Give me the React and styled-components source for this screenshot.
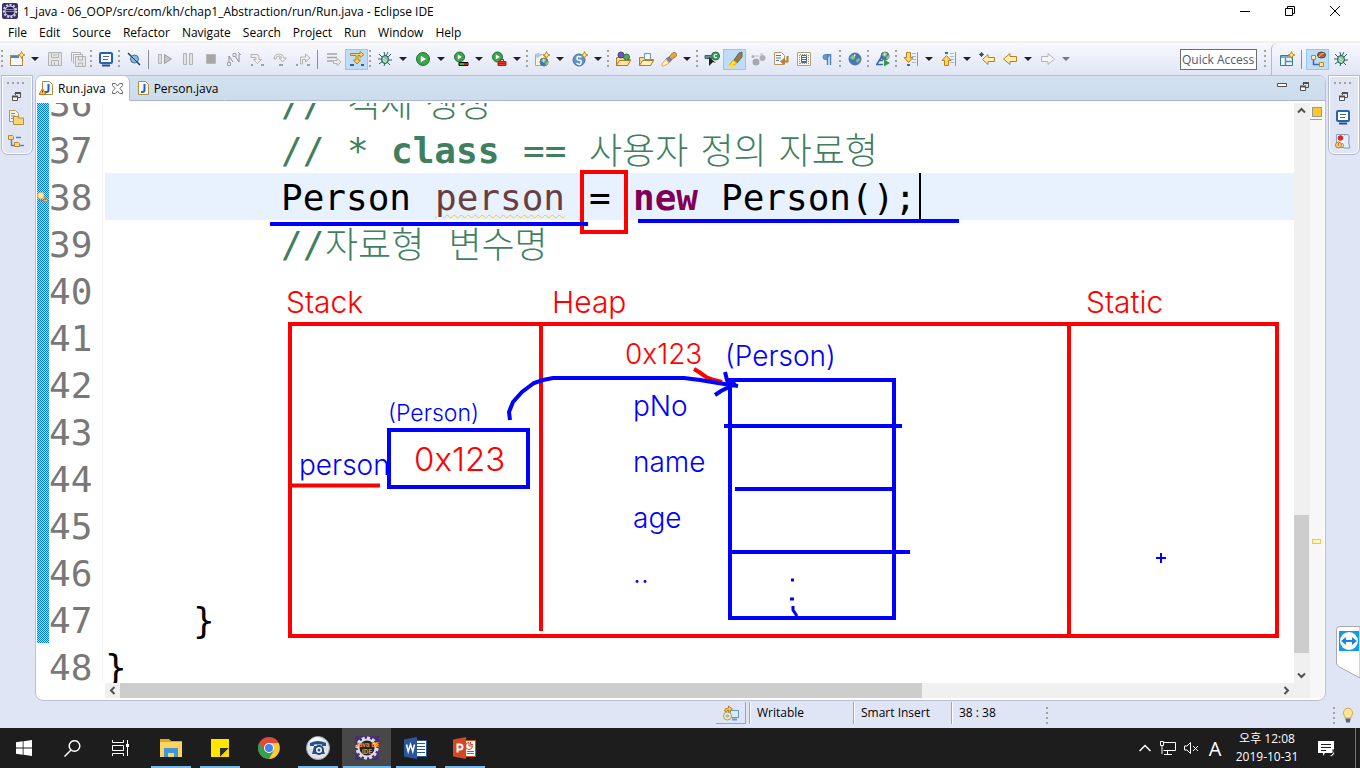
import React from 'react';
import styled, { createGlobalStyle } from 'styled-components';

const UI = '"Open Sans", "Noto Sans CJK KR", sans-serif';
const CODE = '"DejaVu Sans Mono", "Noto Sans CJK KR", monospace';
const HAND = 'Inter, "Noto Sans CJK KR", sans-serif';

const GlobalStyle = createGlobalStyle`
  * { box-sizing: border-box; }
  body { margin: 0; font-family: ${UI}; font-size: 12px; color: #000; background: #e0e5f5; }
  button, input { font: inherit; color: inherit; margin: 0; padding: 0; border: 0; background: none; }
  svg { display: block; flex: none; }
`;

const Screen = styled.div`
  display: flex;
  flex-direction: column;
  height: 100vh;
  overflow: hidden;
`;

/* ---------- title and menu ---------- */
const TitleBar = styled.header`
  display: flex;
  align-items: center;
  height: 22px;
  padding-left: 2px;
  background: #fff;
`;
const Title = styled.h1`
  flex: 1;
  margin: 0 0 0 5px;
  font-size: 12px;
  font-weight: 400;
  white-space: nowrap;
`;
const WindowButton = styled.button`
  display: flex;
  justify-content: center;
  align-items: center;
  width: 45px;
  height: 22px;
  &:last-child { margin-right: 3px; }
`;
const MenuBar = styled.nav`
  display: flex;
  gap: 12px;
  height: 21px;
  padding-left: 8px;
  background: #fff;
  border-bottom: 2px solid #f0f0f0;
`;
const MenuItem = styled.button`
  padding-top: 2px;
  line-height: 18px;
`;

/* ---------- toolbar ---------- */
const ToolBar = styled.div`
  display: flex;
  align-items: center;
  height: 32px;
  background: linear-gradient(#f8f9fe, #e0e5f5);
`;
const Tool = styled.button`
  display: flex;
  justify-content: center;
  align-items: center;
  width: 23px;
  height: 21px;
  border: 1px solid ${(p) => (p.$on ? '#90c8f6' : 'transparent')};
  background: ${(p) => (p.$on ? '#bfdcf8' : 'none')};
`;
const DropButton = styled.button`
  width: 15px;
  height: 21px;
  padding-left: 3px;
`;
const Dots = styled.span`
  width: 5px;
  height: 18px;
  padding-left: 1px;
  background: repeating-linear-gradient(#a8a294 0 2px, transparent 2px 5px) 1px 0 / 2px 100% no-repeat;
`;
const Rule = styled.span`
  width: 8px;
  height: 19px;
  background: linear-gradient(#8d8d92, #8d8d92) 3px 0 / 1px 100% no-repeat;
`;
const Spacer = styled.span`
  flex: 1;
`;
const QuickAccess = styled.input`
  width: 77px;
  height: 21px;
  margin-right: 6px;
  padding-left: 1px;
  border: 1px solid #6d6d6d;
  background: #fff;
  &::placeholder { color: #55596e; opacity: 1; }
`;
const Perspectives = styled.div`
  display: flex;
  align-items: center;
  height: 32px;
  margin-left: 3px;
  padding: 0 8px 0 3px;
  border-left: 1px solid #b6bac8;
  border-top-left-radius: 6px;
`;

/* ---------- workbench ---------- */
const Workbench = styled.main`
  display: flex;
  flex: 1;
  min-height: 0;
  gap: 2px;
  padding-left: 1px;
`;
const TrimStack = styled.aside`
  display: flex;
  flex-direction: column;
  align-items: center;
  align-self: flex-start;
  width: 32px;
  height: 80px;
  padding: 6px 2px 0 0;
  gap: 8px;
  border: 1px solid #b3b9d2;
  border-radius: 0 0 7px 7px;
  box-shadow: inset 0 0 0 1px #fff;
`;
const TrimDots = styled.span`
  width: 18px;
  height: 2px;
  background: repeating-linear-gradient(90deg, #a8a294 0 2px, transparent 2px 5px);
`;
const TrimButton = styled.button`
  display: flex;
  justify-content: center;
  width: 22px;
`;
const Folder = styled.section`
  display: flex;
  flex-direction: column;
  flex: 1;
  min-width: 0;
  border: 1px solid #b9bfd4;
  border-radius: 7px 7px 8px 8px;
  background: #fff;
  overflow: hidden;
`;
const TabStrip = styled.div`
  display: flex;
  height: 25px;
  background: linear-gradient(#d3e1ef, #ccdcec);
`;
const Tab = styled.button`
  display: flex;
  align-items: center;
  gap: 3px;
  padding: 0 6px 0 ${(p) => (p.$active ? '3px' : '5px')};
  background: ${(p) => (p.$active ? '#fff' : 'none')};
  border-bottom: 1px solid ${(p) => (p.$active ? '#fff' : '#aab6cf')};
  border-right: 1px solid ${(p) => (p.$active ? '#b3b9d2' : 'transparent')};
  border-radius: ${(p) => (p.$active ? '6px 6px 0 0' : '0')};
`;
const CloseMark = styled.svg`
  margin-left: 3px;
`;
const TabTail = styled.div`
  display: flex;
  flex: 1;
  justify-content: flex-end;
  align-items: flex-start;
  gap: 13px;
  padding: 6px 16px 0 0;
  border-bottom: 1px solid #aab6cf;
`;
const EditorGrid = styled.div`
  display: grid;
  flex: 1;
  min-height: 0;
  grid-template-columns: minmax(0, 1fr) 16px 14px;
  grid-template-rows: minmax(0, 1fr) 15px;
  padding: 2px 1px 2px;
`;
const Source = styled.div`
  position: relative;
  overflow: hidden;
`;
const Lines = styled.div`
  margin-top: -24px;
`;
const Line = styled.div`
  display: grid;
  grid-template-columns: 12px 43px 11px minmax(0, 1fr);
  height: 47px;
  line-height: 49px;
  font-family: ${CODE};
  font-size: 36px;
  white-space: pre;
`;
const ChangeRuler = styled.span`
  position: relative;
  display: flex;
  align-items: center;
`;
const Dither = styled.svg`
  position: absolute;
  inset: 0;
`;
const Marker = styled.span`
  position: relative;
`;
const LineNumber = styled.span`
  height: 47px;
  color: #787878;
  text-align: right;
`;
const Fold = styled.span`
  border-right: 1px solid #f2f2f2;
`;
const CodeText = styled.code`
  display: flex;
  height: 47px;
  margin-left: 2px;
  padding-left: ${(p) => p.$indent * 22}px;
  background: ${(p) => (p.$current ? '#e8f2fe' : 'none')};
  font-family: inherit;
`;
const inks = { plain: '#000', comment: '#3f7f5f', variable: '#6a3e3e', keyword: '#7f0055' };
const Token = styled.span`
  width: ${(p) => p.$cols * 22}px;
  color: ${(p) => inks[p.$ink]};
  font-weight: ${(p) => (p.$strong ? 700 : 400)};
`;
const Warned = styled.span`
  text-decoration: underline wavy 1px #f4c82d;
  text-underline-offset: 4px;
`;
const Hangul = styled.span`
  margin-right: ${(p) => (p.$wide ? '24px' : '12px')};
  color: #3f7f5f;
  font-family: "Noto Sans CJK KR", sans-serif;
  font-weight: 300;
  line-height: 45px;
`;
const Caret = styled.span`
  width: 2px;
  background: #000;
`;
const Annotations = styled.svg`
  position: absolute;
  top: 0;
  left: 68px;
  overflow: visible;
`;
const Label = styled.text`
  font-family: ${HAND};
  font-weight: 300;
  font-size: ${(p) => p.$size || 28}px;
  fill: ${(p) => p.$tone};
`;
const Bar = styled.div`
  display: flex;
  flex-direction: ${(p) => (p.$across ? 'row' : 'column')};
  margin-left: ${(p) => (p.$across ? '68px' : '0')};
  background: #f0f0f0;
`;
const BarButton = styled.button`
  display: flex;
  flex: none;
  justify-content: center;
  align-items: center;
  width: 15px;
  height: 15px;
`;
const BarPart = styled.span`
  flex: ${(p) => p.$share} 1 0;
  width: ${(p) => (p.$upright ? '15px' : 'auto')};
  background: ${(p) => (p.$thumb ? '#cdcdcd' : 'none')};
`;
const Overview = styled.div`
  display: flex;
  flex-direction: column;
  grid-row: span 2;
  padding: 4px 0 0;
  background: #f7f7f7;
`;
const Summary = styled.span`
  width: 12px;
  height: 13px;
  border-bottom: 1px solid #a0a0a0;
  &::before {
    content: '';
    display: block;
    width: 8px;
    height: 8px;
    margin-left: 2px;
    border: 1px solid #9a9a9a;
    background: #f8c82c;
  }
`;
const OverviewMark = styled.span`
  width: 9px;
  height: 5px;
  margin: 419px 0 0 2px;
  border: 1px solid #efc94a;
  background: #fff3c4;
`;
const RemoteTab = styled.button`
  position: absolute;
  right: 0;
  top: 626px;
`;

/* ---------- status line ---------- */
const StatusLine = styled.footer`
  display: flex;
  height: 27px;
  padding: 1px 3px 4px 716px;
  background: #e0e5f5;
`;
const StatusButton = styled.button`
  display: flex;
  justify-content: center;
  align-items: center;
  width: 30px;
  margin-right: 3px;
  border-right: 1px solid #a2a2a8;
  border-bottom: 1px solid #a2a2a8;
`;
const StatusCell = styled.span`
  width: ${(p) => p.$w}px;
  padding-left: 7px;
  border-left: 1px solid #a2a2a8;
  box-shadow: inset 1px 0 0 #fff;
  line-height: 22px;
`;
const StatusDots = styled(Dots)`
  height: 17px;
  margin-top: 5px;
`;
const TipButton = styled.button`
  padding: 3px 1px 0 3px;
`;

/* ---------- task bar ---------- */
const TaskBar = styled.footer`
  display: flex;
  height: 40px;
  background: #1d1d1d;
  color: #fff;
`;
const SystemGroup = styled.div`
  display: flex;
  margin-right: 2px;
`;
const SystemButton = styled.button`
  display: flex;
  justify-content: center;
  align-items: center;
  width: 48px;
`;
const AppButton = styled.button`
  display: flex;
  justify-content: center;
  align-items: center;
  width: 49px;
  background: ${(p) =>
    p.$running ? 'linear-gradient(#76b9ed, #76b9ed) 50% 100% / ' + (p.$front ? '48px' : '40px') + ' 2px no-repeat' : 'none'};
  background-color: ${(p) => (p.$front ? '#484848' : 'transparent')};
`;
const Tray = styled.div`
  display: flex;
  align-items: center;
  gap: 8px;
  margin-left: auto;
`;
const TrayButton = styled.button`
  display: flex;
  justify-content: center;
  align-items: center;
`;
const InputMode = styled.span`
  width: 16px;
  font-size: 20px;
  text-align: center;
`;
const Clock = styled.time`
  width: 70px;
  margin: 0 8px 0 1px;
  line-height: 18px;
  text-align: center;
  white-space: nowrap;
`;
const DesktopEdge = styled.span`
  align-self: stretch;
  width: 5px;
  margin-left: 12px;
  border-left: 1px solid #777;
`;

/* ---------- icons ---------- */
const Svg = ({ s = 16, children }) => (
  <svg width={s} height={s} viewBox="0 0 16 16" fill="none" aria-hidden="true">{children}</svg>
);
const spark = <path d="M12.500 .5l1 2.500 2.500 1-2.500 1-1 2.500-1-2.500-2.500-1 2.500-1z" fill="#fbe9a0" stroke="#c28f1c" />;
const playBall = (cx, cy, r) => (
  <>
    <circle cx={cx} cy={cy} r={r} fill="#3fa34a" stroke="#1d7435" />
    <path d={`M${cx - r / 3} ${cy - r / 2}v${r}l${r * 0.8} ${-r / 2}z`} fill="#fff" />
  </>
);
const bug = (
  <>
    <path d="M2 3l4 4M1 8h5M2 13l4-3M14 3l-4 4M15 9h-5M13 14l-4-4M7 1l1 4M11 1l-2 4M7 15l1-3" stroke="#2f5f68" />
    <ellipse cx="8" cy="8.500" rx="3.500" ry="4" fill="#8cc39a" stroke="#1e5a5e" />
    <path d="M6 7l4 3M6 9.500l3 2" stroke="#d7efd8" />
  </>
);
const globe = (cx, cy, r) => (
  <>
    <circle cx={cx} cy={cy} r={r} fill="#3c7bbd" stroke="#5b6f96" />
    <path d={`M${cx - r + 1} ${cy - 1}l2-3 3 1 0 2-2 2zM${cx + 1} ${cy + 1}l3-2 1 2-3 3z`} fill="#8fc27c" />
    <path d={`M${cx - 1} ${cy - r + 1}l2 1-2 2z`} fill="#f3e7ae" />
  </>
);
const folderShape = <path d="M1.500 14.500v-8h4l1-1h6v3h3l-3 6z" fill="#fbdc8c" stroke="#b27a24" />;
const monitor = (
  <>
    <rect x="2" y="2" width="12" height="10" rx="1" fill="#fff" stroke="#2d62a8" strokeWidth="2" />
    <path d="M5 5.500h6M5 8.500h5" stroke="#3d6ba8" />
    <path d="M4 14.500h8" stroke="#1f4f92" strokeWidth="2" />
  </>
);
const javaFile = (
  <>
    <path d="M3.500 1.500h7l3 3v10h-10z" fill="#f4f8ff" stroke="#ae8c3c" />
    <path d="M9.500 4v6q0 2-2 2h-1.500" stroke="#2a62a8" strokeWidth="2" />
  </>
);
const warn = (x, y) => (
  <>
    <path d={`M${x} ${y + 6}l3.500-6 3.500 6z`} fill="#f8c24c" stroke="#c07818" />
    <path d={`M${x + 3.5} ${y + 2}v2`} stroke="#5c3a08" />
  </>
);
const bulb = (
  <>
    <path d="M5 11Q5 9 4 8Q2.500 6 4 3.500Q6 1 8 1Q10 1 12 3.500Q13.500 6 12 8Q11 9 11 11z" fill="#fde79a" stroke="#e3a33a" />
    <path d="M5.500 12.500h5M6 14.500h4" stroke="#54697c" strokeWidth="2" />
  </>
);
const stepDash = (c) => <path d="M1 14h4M12 14h3" stroke={c} strokeWidth="2" />;
const G = '#b3b3b3';

const icons = {
  newWizard: (<><rect x="1.500" y="4.500" width="12" height="10" fill="#f3f8ff" stroke="#b98a2c" /><path d="M2 6h8" stroke="#4c84c0" strokeWidth="2" />{spark}</>),
  save: (<><path d="M1.500 1.500h13v13h-13z" fill="#e6e6e8" stroke={G} /><path d="M4.500 2v4.500h7V2M4.500 14v-4.500h7V14M7.500 11v3M6 4h4" stroke={G} /></>),
  saveAll: (<><path d="M1.500 10.500v-9h9v2M3.500 12.500v-9h9v2" stroke={G} /><path d="M5.500 5.500h10v10h-10z" fill="#e6e6e8" stroke={G} /><path d="M8.500 6v3h4V6M8.500 15v-3h4v3" stroke={G} /></>),
  monitor,
  skip: (<><path d="M2 2l12 12" stroke="#1e3f76" strokeWidth="1.500" /><circle cx="8.500" cy="8" r="4" fill="#8eb8d8" stroke="#3c6da4" /><path d="M2 2l12 12" stroke="#1e3f76" /></>),
  resume: (<><path d="M1.500 3.500h3v9h-3z" fill="#ddd" stroke={G} /><path d="M7.500 3.500v9l7-4.500z" fill="#c4c4c6" stroke="#9f9fa2" /></>),
  pause: <path d="M3.500 2.500h3v11h-3zM9.500 2.500h3v11h-3z" fill="#e3e3e6" stroke={G} />,
  stop: <path d="M3.500 3.500h9v9h-9z" fill="#a6a6a8" stroke="#b8b8ba" />,
  disconnect: (<><path d="M3 12V5l4 6M9 5l4 6V3" stroke="#8e8e92" /><path d="M1.500 11.500h3v3h-3zM7 2.500h3v3H7zM12 1l3 3" stroke="#a2a2a6" /></>),
  stepInto: (<><path d="M2 3.500h6q2 0 2 3v2h2.500l-4 4-4-4H7V6.500H2z" fill="#eee" stroke={G} /><path d="M12 14h3M2 14h2" stroke="#9fa0a6" strokeWidth="2" /></>),
  stepOver: (<><path d="M2 8q0-5 5.500-5Q11 3 12 7h2.500l-4 4-3.500-4H10q-1-2-3-2-3 0-3 3z" fill="#eee" stroke={G} /><path d="M7 14h4" stroke="#9fa0a6" strokeWidth="2" /></>),
  stepReturn: (<><path d="M5.500 13V6h5V3l4.500 4-4.500 4V8.500h-3V13z" fill="#eee" stroke={G} /><path d="M1 14h2M12 14h3" stroke="#9fa0a6" strokeWidth="2" /></>),
  dropFrame: (<><path d="M1 3h10M1 6.500h10M1 10h6" stroke="#a5a5a8" strokeWidth="1.500" /><path d="M7.500 9.500H11v-2l4 3.500-4 3.500v-2H7.500z" fill="#eee" stroke={G} /></>),
  filter: (<><path d="M1.500 2.500H11V.5l4 3-4 3v-2H9V9h2.500L8 13 4.500 9H7V4.500H1.500z" fill="#fdd45e" stroke="#bb8118" />{stepDash('#385f96')}</>),
  bug,
  run: playBall(8, 8, 6.5),
  coverage: (<>{playBall(6.5, 6, 5)}<path d="M6 11.500h9v3H6z" fill="#22c322" stroke="#000" /><path d="M11 12h4v2h-4z" fill="#d01818" /></>),
  external: (<>{playBall(6.5, 6, 5)}<path d="M7 10.500h8v4H7z" fill="#e83a32" stroke="#b81818" /><path d="M9.500 10V8.500h3V10M7 12.500h8" stroke="#b81818" /></>),
  webProject: (<><path d="M1.500 3.500h7l4 4v7h-11z" fill="#f8f3df" stroke="#bda66b" /><path d="M1 3l4-1 3 2-5 3z" fill="#a6cbe6" />{globe(10, 11, 4)}{spark}</>),
  servlet: (<><circle cx="7" cy="9" r="6" fill="#5c95cb" stroke="#3f73aa" /><path d="M9.500 6Q5 4.500 5 7t2.500 2.200T9 12 4.500 12" stroke="#fff" strokeWidth="1.500" />{spark}</>),
  openType: (<>{folderShape}<circle cx="6" cy="4" r="3" fill="#6a5ba8" stroke="#4c3f8a" /><circle cx="11.500" cy="6" r="3" fill="#57a565" stroke="#2c7a42" /><path d="M1.500 14.500l3-5h11l-3 5z" fill="#fde6a6" stroke="#b27a24" /></>),
  openTask: (<>{folderShape}<path d="M6.500 2.500h6v6h-6z" fill="#f2f6fd" stroke="#7790b8" /><path d="M1.500 14.500l3-5h11l-3 5z" fill="#fff0c0" stroke="#b27a24" /></>),
  search: (<><path d="M8 6l4-4.500 3 .5.500 3L10 9z" fill="#e9a83d" stroke="#b67824" /><path d="M5 8l3-2 2.500 3L8 11.500z" fill="#8a7fa8" stroke="#6e6790" /><path d="M5 8l3 4-5 3H1v-2z" fill="#fff7c8" stroke="#e0a648" /></>),
  toggle: (<><path d="M1 4.500h9v3H1z" fill="#6f8794" stroke="#43606e" /><path d="M5 6v9l4-4 3 1z" fill="#222" /><circle cx="11.500" cy="5" r="4" fill="#3f9a5b" stroke="#24754a" /><path d="M13 3.500q-3-1-3 1.500t3 1.500" stroke="#fff" /></>),
  marker: (<><path d="M7 9l5-7 3-1v5l-5 6z" fill="#8d7f55" stroke="#6f6748" /><path d="M6 9l4 3-3 2-5 1z" fill="#fbe23a" stroke="#d8a920" /><path d="M0 15h8" stroke="#f8de46" strokeWidth="2" /></>),
  nulls: (<><circle cx="6" cy="11" r="3.500" fill="#a8a8aa" /><circle cx="12.500" cy="7" r="3" fill="#b0b0b2" /><circle cx="3" cy="5.500" r="1.500" fill="#b0b0b2" /><path d="M5 5h4M10 3h3" stroke="#b8b8ba" /></>),
  wrap: (<><path d="M1.500 1.500h7l3 3v9h-10z" fill="#f6f8ff" stroke="#b09a62" /><path d="M3 4.500h5M3 7h5M3 9.500h3" stroke="#56779f" /><path d="M14.500 5v5.500H9.500M11.500 8l-3 2.500 3 2.500" stroke="#b8812a" strokeWidth="2" /></>),
  block: (<><path d="M1.500 1.500h13v13h-13z" fill="#fbf8ec" stroke="#b6a268" /><path d="M4 3.500h8M4 12.500h8M3.500 4v9M12.500 4v9" stroke="#7d95b6" strokeDasharray="1 1" /><path d="M5.500 4.500h5v7h-5z" stroke="#46699c" /><path d="M6 6.500h4M6 8.500h4M6 10.500h4" stroke="#46699c" /></>),
  pilcrow: (<><path d="M12 3.500H6.500a2.500 2.500 0 000 5H8" fill="#6b9ac9" stroke="#4f83b6" /><path d="M8.500 3v11M11.500 3v11" stroke="#4f83b6" strokeWidth="1.500" /></>),
  globe: globe(8, 8, 6),
  service: (<>{globe(10, 5, 4)}<path d="M2 13L7 5M1 13.500h7M4 9.500h4" stroke="#3d66a0" strokeWidth="1.500" /><path d="M9 8.500v7l6-3.500z" fill="#2f9b4c" /></>),
  nextNote: (<><path d="M9 2.500h4M9 5.500h4M9 8.500h4M9 11.500h4" stroke="#a9b6cc" /><path d="M14.500 1v14" stroke="#8a93a8" /><path d="M3.500 1.500h4v5H10l-4.500 5L1 6.500h2.500z" fill="#fdd66a" stroke="#bd7d18" /><path d="M4 14h3" stroke="#3f6ba5" strokeWidth="2" /></>),
  prevNote: (<><path d="M9 2.500h4M9 5.500h4M9 8.500h4M9 11.500h4" stroke="#a9b6cc" /><path d="M14.500 1v14" stroke="#8a93a8" /><path d="M3.500 14.500h4v-5H10l-4.500-5L1 9.500h2.500z" fill="#fdd66a" stroke="#bd7d18" /><path d="M4 2h3" stroke="#3f6ba5" strokeWidth="2" /></>),
  lastEdit: (<><path d="M15.500 6.500H9v-3L3.500 8.500 9 13.500v-3h6.500z" fill="#fff0b0" stroke="#bd7d18" /><path d="M2.500 1v5M0 3.500h5M1 2l3 3M4 2L1 5" stroke="#3c5878" /></>),
  back: <path d="M14.500 5.500H8v-3l-6.500 5.500L8 13.500v-3h6.500z" fill="#fff0b0" stroke="#bd7d18" />,
  forward: <path d="M1.500 5.500H8v-3l6.500 5.500L8 13.500v-3H1.500z" fill="#f4f4f6" stroke="#b4b4b8" />,
  openPersp: (<><path d="M1.500 4.500h12v10h-12z" fill="#eff6ff" stroke="#2f7f86" /><path d="M2 6h10M6.500 7v7M7 10.500h6" stroke="#5a8fb8" strokeWidth="1.500" />{spark}</>),
  javaEE: (<><path d="M3.500 8v5.500h6" stroke="#3a6aa5" strokeWidth="1.500" /><path d="M1.500 4.500h4v4h-4zM9.500 11.500h4v4h-4z" fill="#fdeaa4" stroke="#bd8a22" /><ellipse cx="11.500" cy="4" rx="4" ry="3" fill="#a9653c" stroke="#6e3a1c" /><path d="M9 6q1-3 5-4" stroke="#e7c19c" /></>),
  eclipse: (<><rect width="16" height="16" rx="2" fill="#3d3270" /><circle cx="8" cy="8" r="6.200" stroke="#d4d4dc" strokeWidth="2" strokeDasharray="2 1.500" /><circle cx="8" cy="8" r="5" fill="#2c2255" stroke="#e4e4ea" /><path d="M4 6.500h8M3.500 8.500h9" stroke="#8f88b8" /></>),
  javaFile,
  javaWarn: (<>{javaFile}{warn(0, 8.5)}</>),
  bulb,
  bulbWarn: (<><circle cx="5" cy="6" r="4.500" fill="#fde79a" stroke="#e3a33a" /><path d="M3 12.500h4" stroke="#7d8ea2" strokeWidth="2" />{warn(8, 8)}</>),
  explorer: (<><path d="M1.500 1.500h6l3 3v8h-9z" fill="#f6f3e4" stroke="#b09a62" /><path d="M3 4.500h4M3 7h4M3 9.500h3" stroke="#7089ae" /><path d="M5.500 15.500v-8h4l1 1.500h5v6.500z" fill="#fbd57e" stroke="#bd8a2c" /></>),
  hierarchy: (<><path d="M3.500 7v5.500h4M8 4.500h5M12 12.500h4" stroke="#4f86c0" strokeWidth="1.500" /><path d="M.5 2.500h4l1 1v3h-5zM6.500 9.500h4l1 1v3h-5z" fill="#fbd57e" stroke="#b98a2c" /></>),
  snippet: (<><path d="M1.500 1.500h9v13h-9z" fill="#f2f6fd" stroke="#8fa0bd" /><path d="M9 2q6-2 5 3t1 10H9" fill="#e8eef6" stroke="#7f9ab8" /><circle cx="5.500" cy="5" r="2.800" fill="#e02828" /><circle cx="3.500" cy="12" r="3" fill="#f6cf86" stroke="#b57a24" /><path d="M3.500 10v3M7.500 10q2 2 0 5" stroke="#b57a24" /></>),
  update: (<><rect x="7.500" y="5.500" width="8" height="7" fill="#dcebfb" stroke="#6a94cc" /><path d="M9 14.500h5" stroke="#6a94cc" strokeWidth="2" /><circle cx="4.500" cy="11" r="4" fill="#eee7c8" stroke="#a9a078" /><circle cx="4.500" cy="11" r="1" fill="#fff" stroke="#8c8a78" /><path d="M1.500 6q0-3 4-3V1l4 3-4 3V5q-2 0-2 2z" fill="#f6c94e" stroke="#b8871e" /></>),
};
const Icon = ({ name, s }) => <Svg s={s}>{icons[name]}</Svg>;

const RestoreGlyph = () => (
  <svg width="9" height="9" viewBox="0 0 9 9" fill="none" aria-hidden="true">
    <path d="M3.500 3V1.500h5v4H6M2.500 1.500h6" stroke="#55504a" />
    <path d="M.5 4.500h5v4h-5z" fill="#fff" stroke="#55504a" />
    <path d="M3 1h6M0 4.500h6" stroke="#55504a" strokeWidth="2" />
  </svg>
);

const tools = [
  '|:', 'newWizard', 'v', 'save', 'saveAll', '|:', 'monitor', '|:', 'skip', '|', 'resume', 'pause', 'stop',
  'disconnect', 'stepInto', 'stepOver', 'stepReturn', '|', 'dropFrame', 'filter*', '|:', 'bug', 'v', 'run', 'v',
  'coverage', 'v', 'external', 'v', '|:', 'webProject', 'v', 'servlet', 'v', '|:', 'openType', 'openTask', 'search',
  'v', '|:', 'toggle', 'marker*', 'nulls', 'wrap', 'block', 'pilcrow', '|:', 'globe', '|:', 'service', '|:',
  'nextNote', 'v', 'prevNote', 'v', 'lastEdit', 'back', 'v', 'forward', 'v-',
];

function ToolEntry({ id }) {
  if (id === '|:') return <Dots />;
  if (id === '|') return <Rule />;
  if (id === 'v' || id === 'v-') {
    return (
      <DropButton aria-label="More">
        <svg width="8" height="4" viewBox="0 0 8 4" aria-hidden="true"><path d="M0 0h8L4 4z" fill={id === 'v' ? '#222' : '#777'} /></svg>
      </DropButton>
    );
  }
  const name = id.replace('*', '');
  return <Tool $on={id.endsWith('*')} aria-label={name}><Icon name={name} /></Tool>;
}

const T = ({ c, ink = 'plain', strong, children }) => <Token $cols={c} $ink={ink} $strong={strong}>{children}</Token>;

const lines = [
  { n: 36, indent: 8, code: <><T c={3} ink="comment">//</T><Hangul>객체</Hangul><Hangul>생성</Hangul></> },
  {
    n: 37, indent: 8,
    code: (
      <>
        <T c={3} ink="comment">//</T><T c={2} ink="comment">*</T><T c={6} ink="comment" strong>class</T>
        <T c={3} ink="comment">==</T><Hangul>사용자</Hangul><Hangul>정의</Hangul><Hangul>자료형</Hangul>
      </>
    ),
  },
  {
    n: 38, indent: 8, current: true,
    code: (
      <>
        <T c={7}>Person</T><T c={7} ink="variable"><Warned>person</Warned></T><T c={2}>=</T>
        <T c={4} ink="keyword" strong>new</T><T c={9}>Person();</T><Caret />
      </>
    ),
  },
  { n: 39, indent: 8, code: <><T c={2} ink="comment">//</T><Hangul $wide>자료형</Hangul><Hangul>변수명</Hangul></> },
  ...[40, 41, 42, 43, 44, 45, 46].map((n) => ({ n, indent: 0 })),
  { n: 47, indent: 4, code: <T c={1}>{'}'}</T> },
  { n: 48, indent: 0, code: <T c={1}>{'}'}</T> },
];

/* The rows are an odd number of pixels high, so every other row starts half a period later. */
const ChangedTexture = ({ line }) => (
  <Dither width="100%" height="100%" shapeRendering="crispEdges" aria-hidden="true">
    <defs>
      <pattern id={`changed-${line}`} y={line % 2} width="2" height="2" patternUnits="userSpaceOnUse">
        <path d="M0 0h2v2h-2z" fill="#b4dcf2" />
        <path d="M0 0h1v1h-1zM1 1h1v1h-1z" fill="#0078d7" />
      </pattern>
    </defs>
    <rect width="100%" height="100%" fill={`url(#changed-${line})`} />
  </Dither>
);

const RED = '#f00';
const BLUE = '#00f';

const MemoryDiagram = () => (
  <Annotations width="1188" height="580" viewBox="105 103 1188 580" fill="none" strokeWidth="4">
    <g stroke={RED}>
      <rect x="582" y="172" width="44" height="60" />
      <rect x="290" y="324" width="987" height="312" />
      <path d="M541 324V631M1069 324V636M290 485.500H380" />
      <path d="M694 369l5 3 7 5 8 3 8 2" />
    </g>
    <g stroke={BLUE}>
      <path d="M270 224H588M638 221H959" />
      <rect x="389" y="430" width="139" height="57" />
      <rect x="730" y="380" width="164" height="238" />
      <path d="M724 426H902M735 489H894M730 552H910" />
      <path d="M510 420L509 412L513 402L522 392L534 383L543 380L553 378H684L700 380L718 383L738 386" />
      <path d="M725 372l2 8 3 4M715 395l6-4 10-5 4-4" />
      <path d="M791 580h3M790 599h4M793 606v4l4 6" strokeWidth="3" />
      <path d="M1156 558h10M1161 553v10" strokeWidth="2" />
    </g>
    <g stroke="none">
      <Label $tone={RED} $size={30} x="286" y="313">Stack</Label>
      <Label $tone={RED} $size={30} x="552" y="313">Heap</Label>
      <Label $tone={RED} $size={30} x="1086" y="313">Static</Label>
      <Label $tone={RED} x="625" y="364">0x123</Label>
      <Label $tone={BLUE} x="725" y="366">(Person)</Label>
      <Label $tone={BLUE} x="633" y="416">pNo</Label>
      <Label $tone={BLUE} x="633" y="472">name</Label>
      <Label $tone={BLUE} x="633" y="528">age</Label>
      <Label $tone={BLUE} x="633" y="583">..</Label>
      <Label $tone={BLUE} $size={23} x="388" y="421">(Person)</Label>
      <Label $tone={BLUE} x="299" y="475">person</Label>
      <Label $tone={RED} $size={33} x="414" y="471">0x123</Label>
    </g>
  </Annotations>
);

const Chevron = ({ d }) => (
  <svg width="9" height="9" viewBox="0 0 9 9" fill="none" aria-hidden="true"><path d={d} stroke="#505050" strokeWidth="2" /></svg>
);

export default function App() {
  return (
    <Screen>
      <GlobalStyle />
      <TitleBar>
        <Icon name="eclipse" />
        <Title>1_java - 06_OOP/src/com/kh/chap1_Abstraction/run/Run.java - Eclipse IDE</Title>
        <WindowButton aria-label="Minimize"><svg width="10" height="10"><path d="M0 5.500h10" stroke="#000" /></svg></WindowButton>
        <WindowButton aria-label="Restore">
          <svg width="10" height="10" fill="none"><path d="M.5 2.500h7v7h-7zM2.500 2V.5h7v7H8" stroke="#000" /></svg>
        </WindowButton>
        <WindowButton aria-label="Close"><svg width="10" height="10"><path d="M0 0l10 10M10 0L0 10" stroke="#000" /></svg></WindowButton>
      </TitleBar>
      <MenuBar>
        {['File', 'Edit', 'Source', 'Refactor', 'Navigate', 'Search', 'Project', 'Run', 'Window', 'Help'].map((m) => (
          <MenuItem key={m}>{m}</MenuItem>
        ))}
      </MenuBar>
      <ToolBar>
        {tools.map((id, i) => <ToolEntry key={i} id={id} />)}
        <Spacer />
        <QuickAccess placeholder="Quick Access" aria-label="Quick Access" />
        <Dots />
        <Perspectives>
          <Tool aria-label="Open Perspective"><Icon name="openPersp" /></Tool>
          <Rule />
          <Tool $on aria-label="Java EE"><Icon name="javaEE" /></Tool>
          <Tool aria-label="Debug"><Icon name="bug" /></Tool>
        </Perspectives>
      </ToolBar>

      <Workbench>
        <TrimStack>
          <TrimDots />
          <TrimButton aria-label="Restore"><RestoreGlyph /></TrimButton>
          <TrimButton aria-label="Project Explorer"><Icon name="explorer" /></TrimButton>
          <TrimButton aria-label="Hierarchy"><Icon name="hierarchy" /></TrimButton>
        </TrimStack>
        <Folder>
          <TabStrip>
            <Tab $active>
              <Icon name="javaWarn" />Run.java
              <CloseMark width="11" height="11" viewBox="0 0 11 11" fill="none" aria-hidden="true">
                <path d="M.5.500h3l2 2.500 2-2.500h3v2L8 5.500l2.500 3v2h-3l-2-2.500-2 2.500h-3v-2L3 5.500.5 2.500z" fill="#fff" stroke="#6c6c6c" />
              </CloseMark>
            </Tab>
            <Tab><Icon name="javaFile" />Person.java</Tab>
            <TabTail>
              <button aria-label="Minimize"><svg width="10" height="9" fill="none"><path d="M.5 1.500h9v3h-9z" fill="#fff" stroke="#55504a" /></svg></button>
              <button aria-label="Restore"><RestoreGlyph /></button>
            </TabTail>
          </TabStrip>
          <EditorGrid>
            <Source>
              <Lines>
                {lines.map((l) => (
                  <Line key={l.n}>
                    <ChangeRuler>
                      {l.n < 48 && <ChangedTexture line={l.n} />}
                      {l.current && <Marker><Icon name="bulbWarn" s={12} /></Marker>}
                    </ChangeRuler>
                    <LineNumber>{l.n}</LineNumber>
                    <Fold />
                    <CodeText $indent={l.indent} $current={l.current}>{l.code}</CodeText>
                  </Line>
                ))}
              </Lines>
              <MemoryDiagram />
            </Source>
            <Bar>
              <BarButton aria-label="Scroll up"><Chevron d="M1 6.500L4.500 3 8 6.500" /></BarButton>
              <BarPart $share={396} $upright />
              <BarPart $share={137} $upright $thumb />
              <BarPart $share={15} $upright />
              <BarButton aria-label="Scroll down"><Chevron d="M1 2.500L4.500 6 8 2.500" /></BarButton>
            </Bar>
            <Overview>
              <Summary />
              <OverviewMark />
            </Overview>
            <Bar $across>
              <BarButton aria-label="Scroll left"><Chevron d="M6.500 1L3 4.500 6.500 8" /></BarButton>
              <BarPart $share={801} $thumb />
              <BarPart $share={356} />
              <BarButton aria-label="Scroll right"><Chevron d="M2.500 1L6 4.500 2.500 8" /></BarButton>
            </Bar>
            <Bar />
          </EditorGrid>
        </Folder>
        <TrimStack>
          <TrimDots />
          <TrimButton aria-label="Restore"><RestoreGlyph /></TrimButton>
          <TrimButton aria-label="Console"><Icon name="monitor" /></TrimButton>
          <TrimButton aria-label="Snippets"><Icon name="snippet" /></TrimButton>
        </TrimStack>
      </Workbench>

      <StatusLine>
        <StatusButton aria-label="Updates"><Icon name="update" /></StatusButton>
        <StatusCell $w={104}>Writable</StatusCell>
        <StatusCell $w={98}>Smart Insert</StatusCell>
        <StatusCell $w={94}>38 : 38</StatusCell>
        <StatusDots />
        <Spacer />
        <StatusDots />
        <TipButton aria-label="Tip of the Day"><Icon name="bulb" /></TipButton>
      </StatusLine>

      <TaskBar>
        <SystemGroup>
          <SystemButton aria-label="Start">
            <svg width="16" height="16" viewBox="0 0 16 16"><path d="M0 2.200L6.700 1.300V7.500H0zM7.500 1.200L16 0v7.500H7.500zM0 8.500h6.700v6.200L0 13.800zM7.500 8.500H16V16l-8.500-1.200z" fill="#fff" /></svg>
          </SystemButton>
          <SystemButton aria-label="Search">
            <svg width="17" height="17" viewBox="0 0 17 17" fill="none"><circle cx="10.500" cy="6" r="5.300" stroke="#fff" strokeWidth="1.500" /><path d="M7 10L.5 16.500" stroke="#fff" strokeWidth="1.500" /></svg>
          </SystemButton>
          <SystemButton aria-label="Task View">
            <svg width="17" height="16" viewBox="0 0 17 16" fill="none"><path d="M.5 0v2.500h11V0M.5 5.500h11v5H.5zM.5 16v-2.500h11V16M15.500 0v16" stroke="#fff" /><path d="M14 4h3v3h-3z" fill="#fff" /></svg>
          </SystemButton>
        </SystemGroup>
        <AppButton $running aria-label="File Explorer">
          <svg width="22" height="20" viewBox="0 0 22 20"><path d="M0 1h9l2 2h11v16H0z" fill="#e9a31c" /><path d="M0 4h22v15H0z" fill="#fcd462" /><path d="M4 19v-9h14v9h-4v-4H8v4z" fill="#3d97d8" /></svg>
        </AppButton>
        <AppButton $running aria-label="Sticky Notes">
          <svg width="18" height="18" viewBox="0 0 18 18"><path d="M0 0h18v18H0z" fill="#ffe500" /><path d="M9 18V9h9z" fill="#2b2b2b" /><path d="M18 9v9H9z" fill="#ffd800" /></svg>
        </AppButton>
        <AppButton aria-label="Chrome">
          <svg width="22" height="22" viewBox="0 0 22 22"><circle cx="11" cy="11" r="11" fill="#e04a3b" /><path d="M1.500 5.500A11 11 0 0011 22l4.800-8.300H6.200z" fill="#2ea24f" /><path d="M20.500 6A11 11 0 0111 22l4.800-8.300L11 6z" fill="#fccb3c" /><circle cx="11" cy="11" r="5" fill="#fff" /><circle cx="11" cy="11" r="4" fill="#4384f3" /></svg>
        </AppButton>
        <AppButton $running aria-label="Phone">
          <svg width="24" height="24" viewBox="0 0 24 24" fill="none"><circle cx="12" cy="12" r="11.500" fill="#dfe3e8" stroke="#9aa2ab" /><circle cx="11" cy="8" r="7" fill="#f8f9fa" /><path d="M4 10V7q8-4 16 0v3h-4V8.500H8V10z" fill="#254f86" /><path d="M8 10h8l3 8H6z" fill="#2c5a94" /><circle cx="13" cy="14" r="4" fill="#fff" stroke="#1f4679" strokeWidth="2" /><circle cx="13" cy="14" r="1.500" fill="#254f86" /></svg>
        </AppButton>
        <AppButton $running $front aria-label="Eclipse">
          <svg width="24" height="24" viewBox="0 0 24 24" fill="none">
            <path d="M0 0h24v24H0z" fill="#46306e" />
            <circle cx="12" cy="12" r="10" stroke="#dcdce2" strokeWidth="3" strokeDasharray="3 2.200" />
            <circle cx="12" cy="12" r="8.500" fill="#24202c" stroke="#dcdce2" strokeWidth="2" />
            <text x="12" y="11" textAnchor="middle" fill="#f08a1c" fontSize="7" fontWeight="700" fontFamily="Roboto, sans-serif">Java EE</text>
            <text x="12" y="18" textAnchor="middle" fill="#f08a1c" fontSize="7" fontWeight="700" fontFamily="Roboto, sans-serif">IDE</text>
          </svg>
        </AppButton>
        <AppButton $running aria-label="Word">
          <svg width="23" height="22" viewBox="0 0 23 22" fill="none"><path d="M11.500 3.500h11v16h-11z" fill="#fff" stroke="#2b579a" /><path d="M13 6.500h8M13 9.500h8M13 12.500h8M13 15.500h8" stroke="#2b579a" /><path d="M0 2.500L13 0v22L0 19.500z" fill="#2b579a" /><path d="M2.500 7.500l1.700 7 2.300-7 2.300 7 1.700-7" stroke="#fff" strokeWidth="1.500" /></svg>
        </AppButton>
        <AppButton $running aria-label="PowerPoint">
          <svg width="23" height="22" viewBox="0 0 23 22" fill="none"><path d="M11.500 3.500h11v16h-11z" fill="#fff" stroke="#d24726" /><path d="M14 14.500h7M14 16.500h7" stroke="#d24726" /><path d="M16 5.500a3.500 3.500 0 103.500 3.500H16zM17.500 5v2.500H20" stroke="#d24726" /><path d="M0 2.500L13 0v22L0 19.500z" fill="#d24726" /><path d="M4.500 15.500v-8h2.300q2.700 0 2.700 2.500t-2.700 2.500H5" stroke="#fff" strokeWidth="2" /></svg>
        </AppButton>
        <Tray>
          <TrayButton aria-label="Hidden icons"><svg width="12" height="8" fill="none"><path d="M.5 7L6 1.500 11.500 7" stroke="#fff" strokeWidth="1.500" /></svg></TrayButton>
          <TrayButton aria-label="Network"><svg width="17" height="14" viewBox="0 0 17 14" fill="none"><path d="M5 1.500h11.500v8H4.500M8.500 10v3M5 13.500h8M1.500.500h3v4h-3zM3 5v8" stroke="#fff" /></svg></TrayButton>
          <TrayButton aria-label="Volume"><svg width="15" height="12" viewBox="0 0 15 12" fill="none"><path d="M.5 4v4h2.500l3.500 3.500V.5L3 4zM9 4l5 5M14 4L9 9" stroke="#fff" /></svg></TrayButton>
          <InputMode>A</InputMode>
          <Clock dateTime="2019-10-31T12:08">오후 12:08<br />2019-10-31</Clock>
          <TrayButton aria-label="Notifications">
            <svg width="17" height="17" viewBox="0 0 17 17" fill="none" aria-hidden="true">
              <path d="M0 1h16v12H7l-2 3v-3H0z" fill="#fff" />
              <path d="M3 4.500h10M3 7.500h10M3 10.500h5" stroke="#1d1d1d" />
              <path d="M11 15.500q5-1 4-6 3 4 0 6.500-2 1-4-.5z" fill="#fff" stroke="#1d1d1d" />
            </svg>
          </TrayButton>
          <DesktopEdge />
        </Tray>
      </TaskBar>

      <RemoteTab aria-label="Remote panel">
        <svg width="24" height="53" viewBox="0 0 24 53" fill="none">
          <path d="M24 .5H3.500Q.5.500.5 3.500V37q0 2 3 4L24 52z" fill="#fff" stroke="#a9a9ae" />
          <path d="M3 5h20v20H3z" fill="#1398f2" />
          <circle cx="13" cy="15" r="9" fill="#fff" />
          <path d="M5 15l5-4v3h6v-3l5 4-5 4v-3h-6v3z" fill="#1f80e0" />
        </svg>
      </RemoteTab>
    </Screen>
  );
}
